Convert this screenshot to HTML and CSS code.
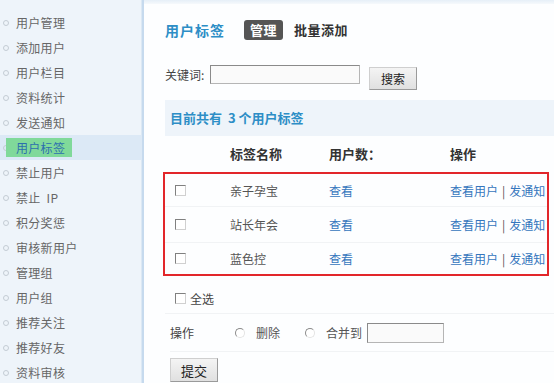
FILE: index.html
```html
<!DOCTYPE html>
<html lang="zh">
<head>
<meta charset="utf-8">
<title>用户标签</title>
<link rel="stylesheet" href="styles.css">
</head>
<body>
<div class="page">
  <aside class="sidebar">
    <ul class="nav">
      <li><i class="dot"></i><span class="lbl">用户管理</span></li>
      <li><i class="dot"></i><span class="lbl">添加用户</span></li>
      <li><i class="dot"></i><span class="lbl">用户栏目</span></li>
      <li><i class="dot"></i><span class="lbl">资料统计</span></li>
      <li><i class="dot"></i><span class="lbl">发送通知</span></li>
      <li class="active"><i class="dot"></i><span class="lbl">用户标签</span></li>
      <li><i class="dot"></i><span class="lbl">禁止用户</span></li>
      <li><i class="dot"></i><span class="lbl">禁止&nbsp; IP</span></li>
      <li><i class="dot"></i><span class="lbl">积分奖惩</span></li>
      <li><i class="dot"></i><span class="lbl">审核新用户</span></li>
      <li><i class="dot"></i><span class="lbl">管理组</span></li>
      <li><i class="dot"></i><span class="lbl">用户组</span></li>
      <li><i class="dot"></i><span class="lbl">推荐关注</span></li>
      <li><i class="dot"></i><span class="lbl">推荐好友</span></li>
      <li><i class="dot"></i><span class="lbl">资料审核</span></li>
    </ul>
  </aside>
  <main class="main">
    <div class="topstrip"></div>
    <div class="title-row">
      <h1 class="title">用户标签</h1>
      <span class="tab tab-on">管理</span>
      <span class="tab">批量添加</span>
    </div>
    <div class="search-row">
      <label class="kw">关键词:</label>
      <span class="input kw-input"></span>
      <span class="btn search-btn">搜索</span>
    </div>
    <div class="band">目前共有&nbsp; 3 个用户标签</div>
    <div class="grid thead">
      <span></span>
      <span>标签名称</span>
      <span>用户数：</span>
      <span>操作</span>
    </div>
    <div class="rows-box">
      <div class="grid row r1">
        <span><i class="cb"></i></span>
        <span class="name">亲子孕宝</span>
        <span class="link">查看</span>
        <span class="ops"><span class="link">查看用户</span><span class="sep">|</span><span class="link">发通知</span></span>
      </div>
      <div class="grid row r2">
        <span><i class="cb"></i></span>
        <span class="name">站长年会</span>
        <span class="link">查看</span>
        <span class="ops"><span class="link">查看用户</span><span class="sep">|</span><span class="link">发通知</span></span>
      </div>
      <div class="grid row r3">
        <span><i class="cb"></i></span>
        <span class="name">蓝色控</span>
        <span class="link">查看</span>
        <span class="ops"><span class="link">查看用户</span><span class="sep">|</span><span class="link">发通知</span></span>
      </div>
    </div>
    <div class="selall"><i class="cb"></i><span>全选</span></div>
    <div class="op-row">
      <span class="op-lbl">操作</span>
      <i class="radio r-del"></i><span class="op-txt">删除</span>
      <i class="radio r-merge"></i><span class="op-txt">合并到</span>
      <span class="input merge-input"></span>
    </div>
    <div class="submit-row"><span class="btn submit-btn">提交</span></div>
  </main>
</div>
</body>
</html>
```
FILE: styles.css
```css
html, body {
  margin: 0;
  padding: 0;
}
body {
  width: 554px;
  height: 383px;
  overflow: hidden;
  font-family: "Noto Sans CJK SC", "Liberation Sans", sans-serif;
  font-size: 12px;
  color: #444;
  background: #fdfeff;
}
.page {
  display: flex;
  height: 383px;
}
.sidebar {
  width: 142px;
  flex: none;
  background: #eef4fa;
  border-right: 2px solid #c6daee;
  box-shadow: inset -1px 0 0 #dbe8f4;
}
.nav {
  list-style: none;
  margin: 0;
  padding: 10px 0 0 0;
}
.nav li {
  display: flex;
  align-items: center;
  height: 25px;
  color: #666;
  letter-spacing: 0.3px;
}
.dot {
  width: 4px;
  height: 4px;
  border: 1px solid #c4ccd4;
  border-radius: 50%;
  margin-left: 3px;
  flex: none;
}
.lbl {
  padding-left: 7px;
  line-height: 19px;
}
.nav li.active {
  background: #dce9f6;
}
.nav li.active .lbl {
  background: #80d99a;
  color: #2c6fae;
  margin-left: -3px;
  padding: 0 7px 0 10px;
}
.main {
  flex: 1;
  display: flex;
  flex-direction: column;
  padding-left: 19px;
  min-width: 0;
}
.topstrip {
  height: 4px;
  margin-left: -19px;
  background: linear-gradient(#e6eff8, #f6f9fc);
}
.title-row {
  display: flex;
  align-items: center;
  height: 20px;
  margin-top: 16px;
  margin-left: 2px;
}
.title {
  margin: 0;
  font-size: 14px;
  font-weight: bold;
  color: #2d8ec6;
  letter-spacing: 1px;
}
.tab {
  font-size: 13px;
  font-weight: bold;
  color: #333;
  line-height: 20px;
  letter-spacing: 0.5px;
}
.tab-on {
  margin-left: 19px;
  margin-right: 11px;
  background: #555;
  color: #fff;
  border-radius: 3px;
  padding: 0 6px;
}
.search-row {
  display: flex;
  align-items: flex-start;
  margin-top: 25px;
  height: 25px;
  margin-left: 2px;
}
.kw {
  line-height: 20px;
  color: #444;
  width: 45px;
}
.input {
  display: block;
  box-sizing: border-box;
  background: #fafafa;
  border: 1px solid #b5b5b5;
  border-top-color: #8a8a8a;
  border-left-color: #8a8a8a;
}
.kw-input {
  width: 150px;
  height: 19px;
}
.btn {
  display: flex;
  align-items: center;
  justify-content: center;
  box-sizing: border-box;
  background: linear-gradient(#f4f4f4, #e0e0e0);
  border: 1px solid #9a9a9a;
  border-top-color: #cfcfcf;
  border-left-color: #cfcfcf;
  color: #222;
  font-size: 12px;
}
.search-btn {
  width: 48px;
  height: 23px;
  margin-left: 9px;
  margin-top: 2px;
}
.band {
  margin-top: 10px;
  margin-left: 2px;
  height: 36px;
  line-height: 36px;
  background: #eef4fa;
  padding-left: 5px;
  color: #2d8ec6;
  font-weight: bold;
  font-size: 13px;
}
.grid {
  display: grid;
  grid-template-columns: 65px 99px 121px 1fr;
  align-items: center;
}
.thead {
  height: 35px;
  margin-left: 2px;
  font-weight: bold;
  font-size: 13px;
  color: #333;
}
.rows-box {
  margin-top: 1px;
  margin-right: 5px;
  border: 2px solid #e2262a;
}
.row {
  border-bottom: 1px solid #f1f3f5;
}
.r1 { height: 32px; }
.r2 { height: 35px; }
.r3 { height: 31px; border-bottom: 0; }
.cb {
  display: block;
  width: 11px;
  height: 11px;
  box-sizing: border-box;
  background: #fff;
  border: 1px solid #d0d0d0;
  border-top-color: #808080;
  border-left-color: #808080;
  margin-left: 10px;
}
.name {
  color: #555;
}
.link {
  color: #3576bd;
}
.ops {
  white-space: nowrap;
}
.sep {
  color: #555;
  margin: 0 4px;
}
.selall {
  display: flex;
  align-items: center;
  height: 24px;
  margin-top: 10px;
  margin-left: 2px;
  padding-bottom: 3px;
  border-bottom: 1px solid #f1f3f5;
}
.selall span {
  margin-left: 4px;
  color: #444;
}
.op-row {
  display: flex;
  align-items: center;
  height: 37px;
  margin-left: 7px;
  border-bottom: 1px solid #f1f3f5;
}
.op-lbl {
  width: 65px;
  color: #444;
}
.radio {
  display: block;
  width: 10px;
  height: 10px;
  box-sizing: border-box;
  border-radius: 50%;
  border: 1px solid #e4e4e4;
  border-top-color: #8a8a8a;
  border-left-color: #8a8a8a;
  background: #fff;
}
.op-txt {
  color: #555;
  margin-left: 11px;
}
.r-merge {
  margin-left: 25px;
}
.merge-input {
  width: 77px;
  height: 20px;
  margin-left: 5px;
}
.submit-row {
  margin-top: 6px;
  margin-left: 7px;
}
.submit-btn {
  width: 48px;
  height: 24px;
  font-size: 13px;
}
```
